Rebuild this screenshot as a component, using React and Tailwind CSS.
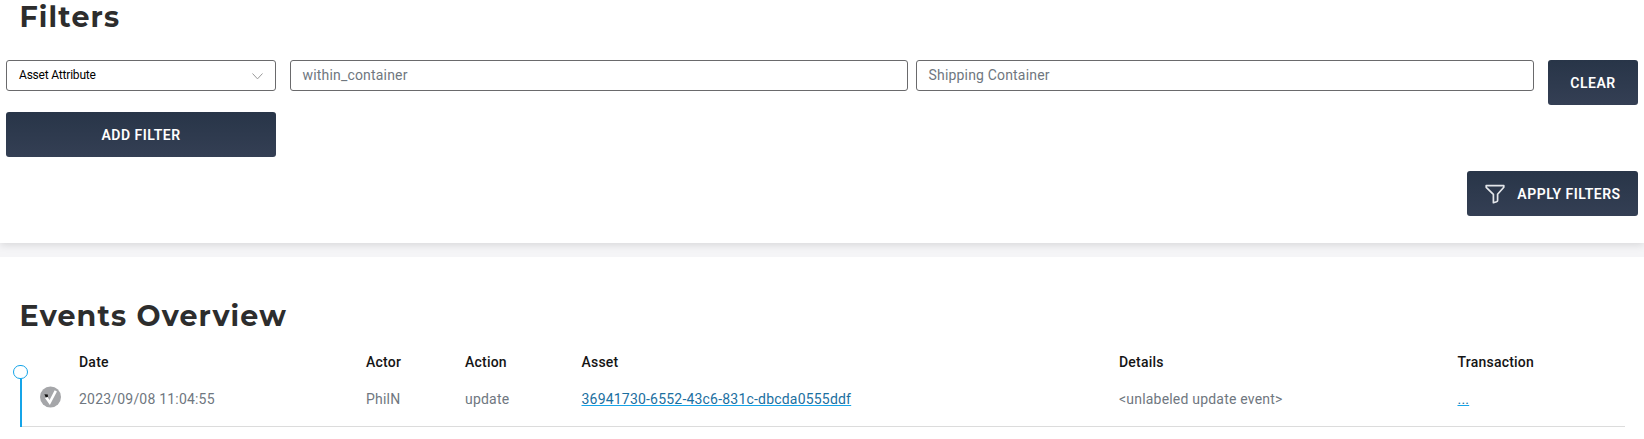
const columns = ["Date", "Actor", "Action", "Asset", "Details", "Transaction"];

function Heading({ children, className }) {
  return (
    <h2 className={`pl-[19.5px] font-['Montserrat','Inter',sans-serif] text-[28.5px] font-bold tracking-[1.15px] text-[#2d2d2d] ${className}`}>
      {children}
    </h2>
  );
}

function Button({ children, className }) {
  return (
    <button
      className={`flex h-[45px] shrink-0 items-center justify-center rounded-[3px] bg-linear-to-b from-[#283548] to-[#343f54] text-[14px] leading-5 font-semibold tracking-[0.5px] text-white ${className}`}
    >
      {children}
    </button>
  );
}

function TextField({ value }) {
  return (
    <div className="h-[31px] flex-1 rounded-[3px] border border-[#6a6a6c] pl-[11.5px] text-[14px] leading-[29px] tracking-[0.18px] text-[#6f7780]">
      {value}
    </div>
  );
}

function FunnelIcon() {
  return (
    <svg width="20" height="20" viewBox="0 0 20 20" fill="none" stroke="#e3e6ea" strokeWidth="1.7" strokeLinejoin="round">
      <path d="M1.2 1.6h17.6v1.7L12.6 10.3v6.2q0 1-1 1.3l-3.2.9v-8.4L1.2 3.3z" />
    </svg>
  );
}

function CheckBadge() {
  return (
    <svg width="22" height="22" viewBox="0 0 22 22">
      <circle cx="10.5" cy="11" r="10.5" fill="#a5a6a9" />
      <path d="M6 11.2l3.7 5.4L15.8 4.9" fill="none" stroke="#fff" strokeWidth="2.6" />
      <path d="M4.4 8.2l3.4.4.2 2.2-2.2.6z" fill="#111" />
    </svg>
  );
}

export default function App() {
  return (
    <div className="h-[439px] w-[1644px] overflow-hidden bg-[#f5f5f7] font-['Roboto',sans-serif]">
      <section className="h-[243px] bg-white shadow-[0_2px_8px_rgba(0,0,0,0.12)]">
        <Heading className="h-[60px] leading-[33px]">Filters</Heading>
        <div className="flex items-start pr-[6px] pl-[6px]">
          <div className="flex h-[31px] w-[270px] items-center justify-between rounded-[3px] border border-[#6a6a6c] pr-[12px] pl-3 text-[12px] tracking-[-0.2px] text-black">
            <span className="-mt-0.5">Asset Attribute</span>
            <svg width="11" height="7" viewBox="0 0 11 7" fill="none" stroke="#999" className="mt-0.5">
              <path d="M.5.5l5 5.4 5-5.4" />
            </svg>
          </div>
          <div className="ml-[14px] flex flex-1 gap-2">
            <TextField value="within_container" />
            <TextField value="Shipping Container" />
          </div>
          <Button className="ml-[14px] w-[90px]">CLEAR</Button>
        </div>
        <div className="mt-[7px] pl-[6px]">
          <Button className="w-[270px]">ADD FILTER</Button>
        </div>
        <div className="mt-[14px] flex justify-end pr-[6px]">
          <Button className="w-[171px] gap-[12px] pl-px">
            <FunnelIcon />
            APPLY FILTERS
          </Button>
        </div>
      </section>

      <section className="mt-[14px] h-[182px] bg-white pt-[42px]">
        <Heading className="h-[52px] leading-[34px]">Events Overview</Heading>
        <div className="flex h-[76px] pl-[13px]">
          <div className="flex w-[15px] flex-col items-center pt-[14px]">
            <div className="h-[14px] w-[15px] shrink-0 rounded-full border border-[#15a4e8] bg-white" />
            <div className="w-[2px] flex-1 bg-[#15a4e8]" />
          </div>
          <div className="-ml-[6px] h-full w-[1603px] border-b border-[#dcdcdc]">
            <div className="grid h-[22px] grid-cols-[57px_287px_99px_116.5px_537.5px_338.5px_1fr] text-[14px] leading-[22px] font-medium tracking-[0.22px] text-[#151515]">
              <span />
              {columns.map((name) => (
                <span key={name}>{name}</span>
              ))}
            </div>
            <div className="mt-[15px] grid grid-cols-[57px_287px_99px_116.5px_537.5px_338.5px_1fr] text-[14px] leading-[22px] tracking-[0.2px] text-[#6f7780]">
              <span className="-mt-[2px] pl-[18px]">
                <CheckBadge />
              </span>
              <span>2023/09/08 11:04:55</span>
              <span>PhilN</span>
              <span>update</span>
              <span>
                <a className="text-[#1b6f9f] underline decoration-[#15a4e8]">36941730-6552-43c6-831c-dbcda0555ddf</a>
              </span>
              <span>&lt;unlabeled update event&gt;</span>
              <span>
                <a className="text-[#1b6f9f] underline decoration-[#15a4e8]">...</a>
              </span>
            </div>
          </div>
        </div>
      </section>
    </div>
  );
}
